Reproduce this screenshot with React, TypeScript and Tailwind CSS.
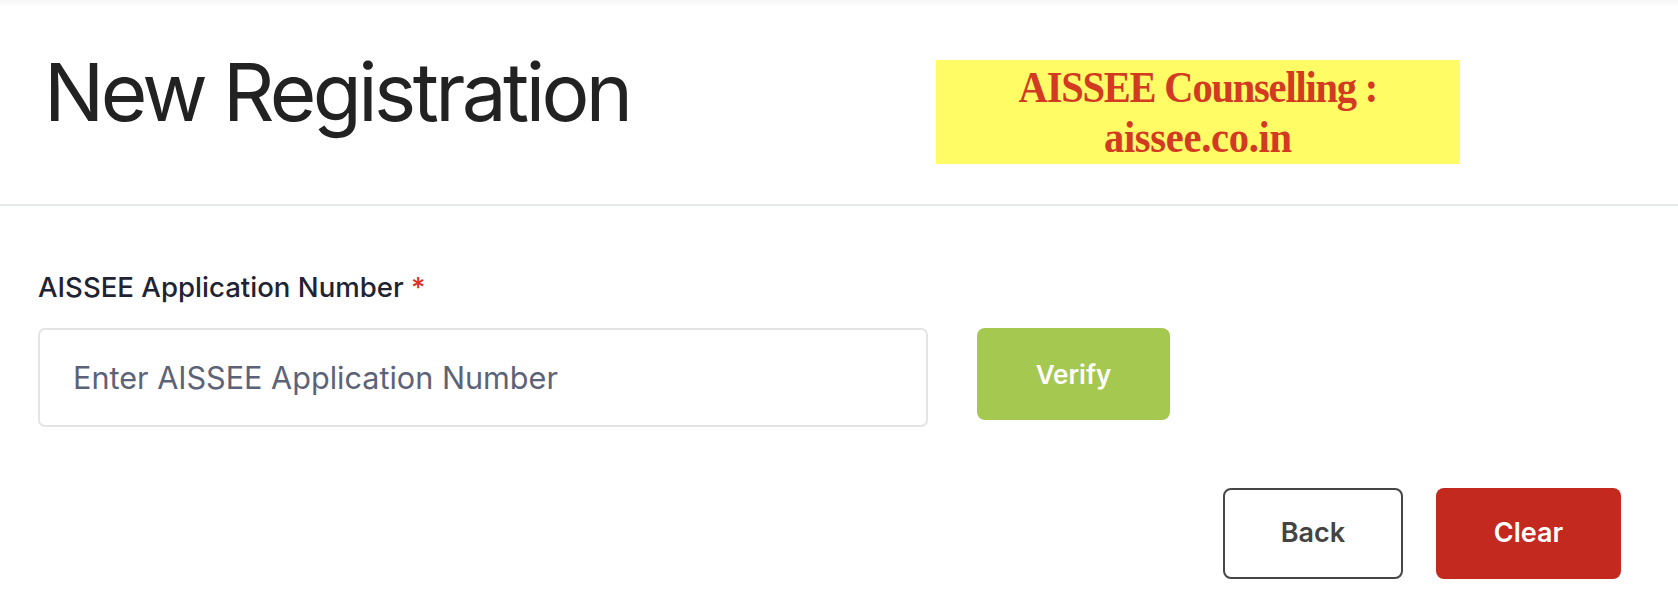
import React from "react";

export default function App() {
  return (
    <div className="relative w-[1678px] h-[604px] bg-white overflow-hidden" style={{ fontFamily: 'Inter, "Noto Sans", sans-serif' }}>
      <div className="h-[6px] bg-gradient-to-b from-[#f6f6f6] to-white" />
      <header className="h-[200px] border-b-2 border-[#e4e7ec] px-[44px] flex items-start">
        <h1 className="mt-[38px] text-[80px] leading-[96px] font-normal text-[#222222] tracking-[-3.6px]">New Registration</h1>
      </header>
      <div className="absolute left-[936px] top-[60px] w-[524px] h-[104px] bg-[#fffc66] flex flex-col items-center justify-center">
        <div className="scale-x-[0.92] flex flex-col items-center text-[#d23a22] font-bold pt-[2px]" style={{ fontFamily: '"Liberation Serif", serif' }}>
          <span className="text-[44px] leading-[50px] tracking-[-1.3px] whitespace-nowrap">AISSEE Counselling :</span>
          <span className="text-[44px] leading-[50px] tracking-[-0.3px] whitespace-nowrap">aissee.co.in</span>
        </div>
      </div>
      <main className="px-[38px] pt-[63px]">
        <label className="block text-[27.6px] leading-[36px] font-medium text-[#1e2433]">
          AISSEE Application Number <span className="text-[#e0301e]">*</span>
        </label>
        <div className="mt-[23px] flex items-start gap-[49px]">
          <input
            type="text"
            placeholder="Enter AISSEE Application Number"
            className="w-[890px] h-[99px] border-2 border-[#e4e4e4] rounded-[7px] px-[33px] text-[30.6px] text-[#1e2433] placeholder:text-[#5c6379] outline-none"
          />
          <button className="w-[193px] h-[92px] rounded-[8px] bg-[#a4c850] text-white text-[26px] font-semibold">Verify</button>
        </div>
        <div className="mt-[61px] pr-[19px] flex justify-end gap-[33px]">
          <button className="w-[180px] h-[91px] rounded-[8px] border-2 border-[#464646] text-[#444444] text-[27px] font-semibold bg-white">Back</button>
          <button className="w-[185px] h-[91px] rounded-[8px] bg-[#c3291e] text-white text-[27px] font-semibold">Clear</button>
        </div>
      </main>
    </div>
  );
}
